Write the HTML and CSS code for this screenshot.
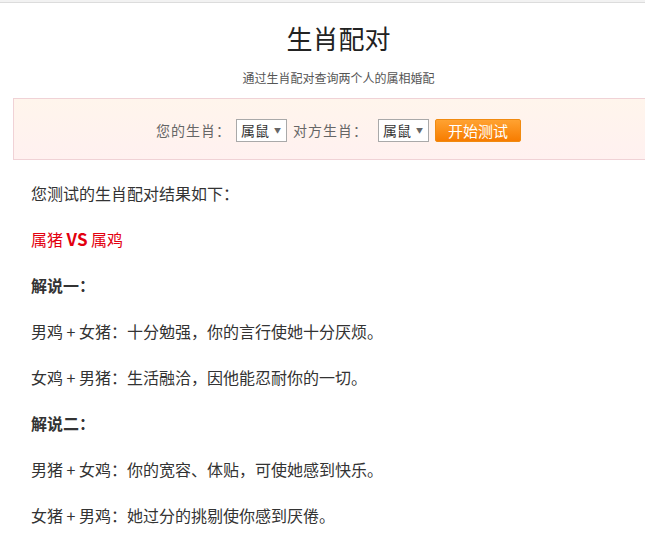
FILE: index.html
```html
<!DOCTYPE html>
<html lang="zh-CN">
<head>
<meta charset="utf-8">
<title>生肖配对</title>
<link rel="stylesheet" href="styles.css">
</head>
<body>
<div class="topbar"></div>
<div class="page">
  <header class="head">
    <h1 class="title">生肖配对</h1>
    <p class="subtitle">通过生肖配对查询两个人的属相婚配</p>
  </header>
  <div class="formbox">
    <div class="formrow">
      <span class="label">您的生肖：</span>
      <span class="select"><span class="sel-text">属鼠</span><span class="sel-arrow">▼</span></span>
      <span class="label label-2">对方生肖：</span>
      <span class="select"><span class="sel-text">属鼠</span><span class="sel-arrow">▼</span></span>
      <button class="btn" type="button">开始测试</button>
    </div>
  </div>
  <div class="content">
    <p>您测试的生肖配对结果如下：</p>
    <p class="result">属猪 <b>VS</b> 属鸡</p>
    <p class="heading">解说一：</p>
    <p>男鸡 + 女猪：十分勉强，你的言行使她十分厌烦。</p>
    <p>女鸡 + 男猪：生活融洽，因他能忍耐你的一切。</p>
    <p class="heading">解说二：</p>
    <p>男猪 + 女鸡：你的宽容、体贴，可使她感到快乐。</p>
    <p>女猪 + 男鸡：她过分的挑剔使你感到厌倦。</p>
  </div>
</div>
</body>
</html>
```

FILE: styles.css
```css
html, body {
  margin: 0;
  padding: 0;
  background: #fff;
  overflow: hidden;
}
body {
  font-family: "Noto Sans CJK SC", "Noto Sans", "Liberation Sans", sans-serif;
  color: #333;
}
.topbar {
  height: 2px;
  background: #f2f2f2;
  border-bottom: 1px solid #dcdcdc;
}
.page {
  width: 677px;
}
.head {
  text-align: center;
}
.title {
  margin: 20px 0 0;
  font-size: 26px;
  line-height: 30px;
  font-weight: normal;
  color: #222;
}
.subtitle {
  margin: 16px 0 0;
  font-size: 12px;
  line-height: 18px;
  color: #555;
}
.formbox {
  margin: 11px 13px 0;
  height: 60px;
  border: 1px solid #f0d2d6;
  background: linear-gradient(#fff5ec, #fff1f0);
  display: flex;
  align-items: center;
  justify-content: center;
}
.formrow {
  display: flex;
  align-items: center;
  font-size: 14px;
  color: #666;
  margin-top: 2px;
}
.label {
  margin-right: 5px;
  letter-spacing: 1px;
}
.label-2 {
  margin-left: 6px;
  margin-right: 10px;
}
.select {
  display: inline-flex;
  align-items: center;
  justify-content: space-between;
  box-sizing: border-box;
  width: 51px;
  height: 23px;
  padding: 0 5px 0 4px;
  background: #fff;
  border: 1px solid #a9a9a9;
  color: #333;
  font-size: 14px;
}
.sel-text {
  line-height: 20px;
}
.sel-arrow {
  font-size: 7px;
  color: #666;
  line-height: 10px;
}
.btn {
  margin-left: 6px;
  width: 86px;
  height: 23px;
  padding: 0;
  border: 1px solid #f08a10;
  border-radius: 2px;
  background: linear-gradient(#ffa231, #f77c00);
  color: #fff;
  font-family: inherit;
  font-size: 15px;
  line-height: 21px;
}
.content {
  padding: 18px 0 0 31px;
  font-size: 16px;
}
.content p {
  margin: 0 0 16px;
  line-height: 30px;
}
.content .result {
  color: #e3000f;
}
.content .result b {
  font-size: 17px;
}
.content .heading {
  font-weight: bold;
}
```
